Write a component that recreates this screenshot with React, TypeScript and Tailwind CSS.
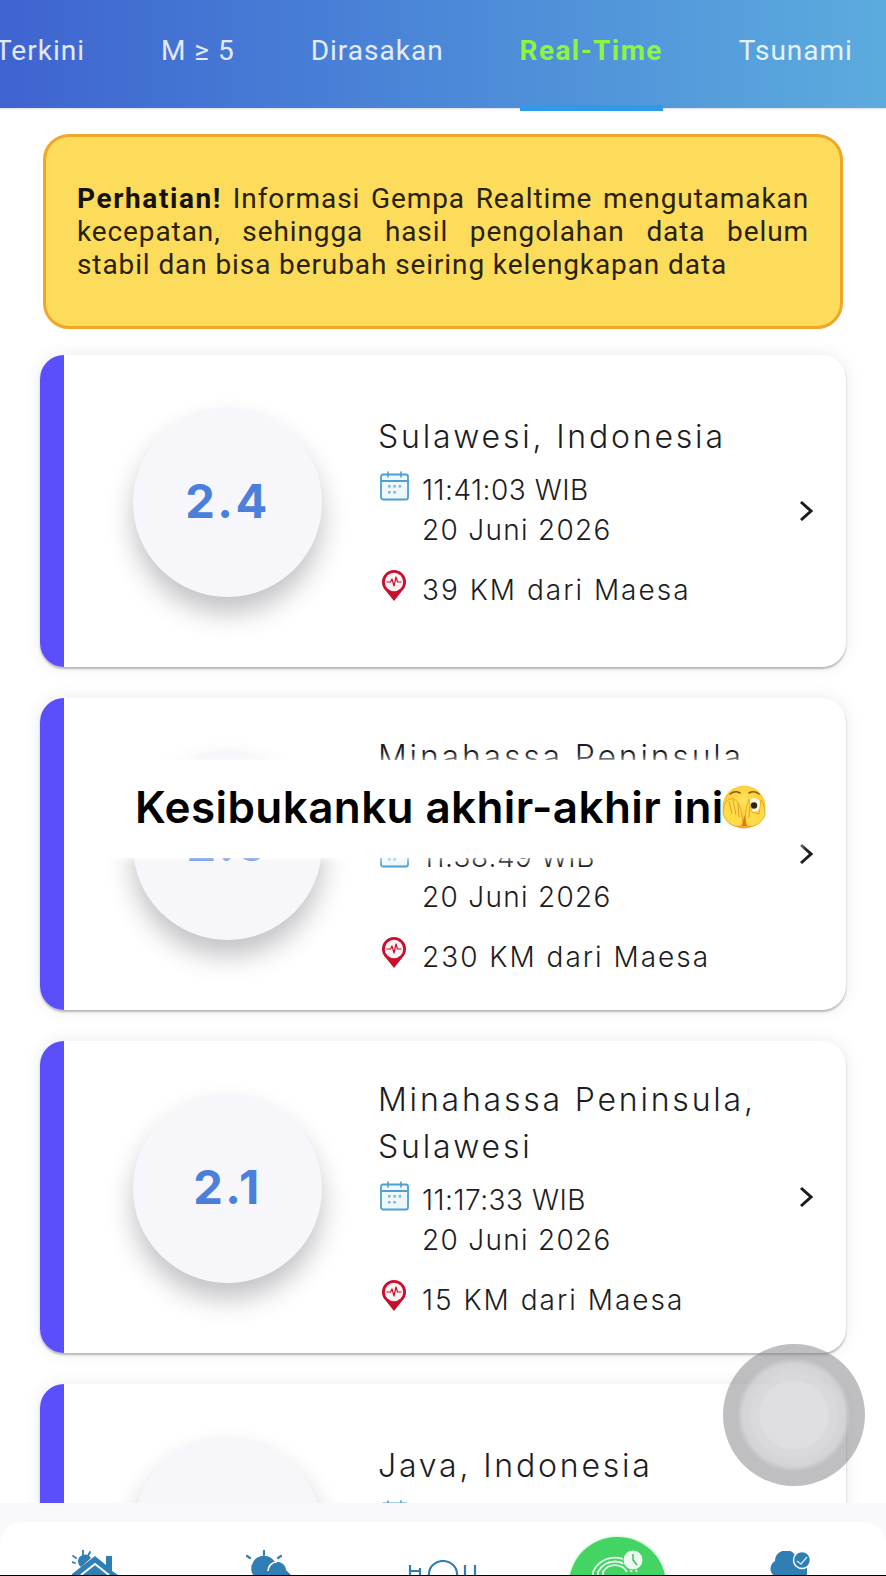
import React from 'react';

interface Quake {
  mag: string;
  place: string[];
  time: string;
  date: string;
  distance: string;
}

const quakes: Quake[] = [
  { mag: '2.4', place: ['Sulawesi, Indonesia'], time: '11:41:03 WIB', date: '20 Juni 2026', distance: '39 KM dari Maesa' },
  { mag: '2.5', place: ['Minahassa Peninsula,', 'Sulawesi'], time: '11:38:49 WIB', date: '20 Juni 2026', distance: '230 KM dari Maesa' },
  { mag: '2.1', place: ['Minahassa Peninsula,', 'Sulawesi'], time: '11:17:33 WIB', date: '20 Juni 2026', distance: '15 KM dari Maesa' },
  { mag: '2.3', place: ['Java, Indonesia'], time: '11:02:18 WIB', date: '20 Juni 2026', distance: '112 KM dari Maesa' },
];

const tabs = ['Terkini', 'M ≥ 5', 'Dirasakan', 'Real-Time', 'Tsunami'];

const CalendarIcon = () => (
  <svg width="29" height="30" viewBox="0 0 29 30" fill="none" className="block">
    <rect x="1" y="3.5" width="27" height="25" rx="2" stroke="#4f9fd0" strokeWidth="1.8" fill="#eef7fc" />
    <path d="M1 10h27" stroke="#4f9fd0" strokeWidth="1.8" />
    <path d="M8 1v5M21 1v5" stroke="#4f9fd0" strokeWidth="1.6" strokeLinecap="round" />
    <g fill="#7fb9dc">
      <rect x="8" y="14" width="2.6" height="2.6" />
      <rect x="13.3" y="14" width="2.6" height="2.6" />
      <rect x="18.6" y="14" width="2.6" height="2.6" />
      <rect x="8" y="20" width="2.6" height="2.6" />
      <rect x="13.3" y="20" width="2.6" height="2.6" />
    </g>
  </svg>
);

const PinIcon = () => (
  <svg width="26" height="33" viewBox="0 0 26 33" className="block">
    <path d="M13 32 L5 22 A12 12 0 1 1 21 22 Z" fill="#c8102e" />
    <circle cx="13" cy="13" r="9.2" fill="#fdf3f4" />
    <path d="M5.5 13h4l1.5-3 2 7 2-9 1.5 5h4" fill="none" stroke="#c8102e" strokeWidth="1.2" strokeLinejoin="round" />
  </svg>
);

const PeekEmoji = () => (
  <svg width="46" height="46" viewBox="0 0 46 46" className="block">
    <defs>
      <radialGradient id="face" cx="50%" cy="35%" r="70%">
        <stop offset="0%" stopColor="#ffe45c" />
        <stop offset="75%" stopColor="#fdc42f" />
        <stop offset="100%" stopColor="#ee8f1c" />
      </radialGradient>
    </defs>
    <circle cx="23" cy="23" r="21.5" fill="url(#face)" />
    <path d="M9 10q5-4 10-1M28 9q5-3 10 1" fill="none" stroke="#8a5a12" strokeWidth="1.6" strokeLinecap="round" />
    <circle cx="33" cy="21" r="7" fill="#fff6dc" />
    <circle cx="33" cy="21.5" r="3.2" fill="#2e2210" />
    <path d="M2 30 C2 19 7 14 12 15 C18 16 21 27 22 40 C18 45 6 42 2 30 Z" fill="#ffdc48" stroke="#e99a20" strokeWidth="0.8" />
    <path d="M24 40 C24 30 26 20 28 15 L31 28 L38 30 L40 16 C43 20 44 26 44 31 C40 42 28 45 24 40 Z" fill="#ffdc48" stroke="#e99a20" strokeWidth="0.8" />
    <path d="M8 17l3 13M12 16l3 15M17 19l1 14M29 20l-1 14" stroke="#e0962a" strokeWidth="0.9" />
    <path d="M21 42l2.5-11 2.5 11z" fill="#e2761a" />
  </svg>
);

const HouseIcon = () => (
  <svg width="46" height="25" viewBox="0 0 46 25" className="block">
    <g stroke="#2f7fb5" strokeWidth="1.8" strokeLinecap="round">
      <path d="M11 0v5M1 6l3 2M18 2l-2 4M0 12l3 1" />
    </g>
    <path d="M6 12a7 7 0 0 1 13-4L9 17a7 7 0 0 1-3-5z" fill="#2f7fb5" />
    <path d="M0 24L23 6l11 9V6h6v15l6 4H0z" fill="#2f7fb5" />
    <path d="M9 25l14-11 14 11" fill="none" stroke="#fff" strokeWidth="2" />
  </svg>
);

const SunIcon = () => (
  <svg width="46" height="25" viewBox="0 0 46 25" className="block">
    <g stroke="#2f7fb5" strokeWidth="2.2" strokeLinecap="round">
      <path d="M18 1v4M1 6l3 2M35 6l-3 2" />
    </g>
    <path d="M7 25a11 11 0 0 1 22-13 9 9 0 0 1 11 8l5 5z" fill="#2f7fb5" />
    <path d="M22 21a9 9 0 0 1 9-9" fill="none" stroke="#fff" strokeWidth="1.6" />
  </svg>
);

const ChartIcon = () => (
  <svg width="70" height="15" viewBox="0 0 70 15" fill="none" className="block">
    <g stroke="#2f7fb5" strokeWidth="2.2">
      <path d="M2 15V5M2 11h9M12 8v7M57 5v10M67 5v10" />
      <path d="M21 15v-1a14 13 0 0 1 28 0v1" />
    </g>
  </svg>
);

const RadarPill = () => (
  <div className="flex h-[80px] w-[97px] justify-center rounded-t-[48px] bg-[#44d464] pt-[13px] shadow-[0_0_3px_#a0f0b0]">
    <svg width="52" height="25" viewBox="0 0 52 25" fill="none" className="block">
      <g stroke="#eafbef" strokeWidth="1.8">
        <path d="M2 25v-3a24 24 0 0 1 44 0" />
        <path d="M7 25v-3a19 19 0 0 1 34 0" />
        <path d="M12 25v-3a14 14 0 0 1 24 0" />
      </g>
      <circle cx="42" cy="10" r="10" fill="#eafbef" stroke="#44d464" strokeWidth="1" />
      <path d="M42 4v6l4 5" stroke="#44b060" strokeWidth="1.4" fill="none" />
    </svg>
  </div>
);

const CloudCheckIcon = () => (
  <svg width="44" height="24" viewBox="0 0 44 24" className="block">
    <path d="M4 24a9 9 0 0 1 2-14 11 11 0 0 1 20-6l12 10v10z" fill="#2f7fb5" />
    <circle cx="33" cy="9" r="8.5" fill="#2f7fb5" stroke="#fff" strokeWidth="1.4" />
    <path d="M28 10l4 3 6-7" fill="none" stroke="#cfe6f5" strokeWidth="1.4" />
  </svg>
);

const QuakeCard = ({ quake }: { quake: Quake }) => (
  <div className="flex h-[312px] flex-none overflow-hidden rounded-[24px] bg-white shadow-[0_2px_2px_rgba(50,50,60,0.32),0_0_16px_rgba(60,60,100,0.1)]">
    <div className="w-[24px] flex-none bg-[#5b4ffb]" />
    <div className="ml-[69px] flex w-[189px] flex-none items-center pb-[17px]">
      <div className="flex h-[189px] w-[189px] items-center justify-center rounded-full bg-[#f6f6fb] shadow-[0_16px_26px_rgba(40,40,50,0.28)]">
        <span className="pb-[2px] font-['Inter'] text-[47px] font-bold tracking-[2.4px] text-[#4a80dc]">{quake.mag}</span>
      </div>
    </div>
    <div className="ml-[56px] flex flex-1 flex-col justify-center pt-[1px] font-['Inter'] font-light text-[#1d1d1f]">
      {quake.place.map((line) => (
        <div key={line} className="h-[47px] text-[32px] leading-[47px] tracking-[2.8px]">{line}</div>
      ))}
      <div className="mt-[10px] flex">
        <div className="w-[44px] flex-none pl-[2px] pt-[1px]"><CalendarIcon /></div>
        <div className="text-[28px] leading-[40px]">
          <div className="tracking-[0.5px]">{quake.time}</div>
          <div className="tracking-[1.3px]">{quake.date}</div>
        </div>
      </div>
      <div className="mt-[20px] flex">
        <div className="w-[44px] flex-none pl-[3px]"><div className="-mt-[1px]"><PinIcon /></div></div>
        <div className="text-[28px] leading-[40px] tracking-[2px]">{quake.distance}</div>
      </div>
    </div>
    <div className="flex w-[47px] flex-none items-center">
      <svg width="14" height="22" viewBox="0 0 14 22" fill="none">
        <path d="M2 2l10 9-10 9" stroke="#1b1b20" strokeWidth="3" />
      </svg>
    </div>
  </div>
);

export default function App() {
  return (
    <div className="relative flex h-[1576px] w-[886px] flex-col overflow-hidden bg-white">
      <header className="relative z-10 -ml-[5px] flex h-[108px] flex-none gap-[76px] bg-gradient-to-r from-[#3f63d0] to-[#5cabde] font-['Roboto'] text-[28px] tracking-[1px] text-white/85 shadow-[0_1px_2px_rgba(0,0,0,0.15)]">
        {tabs.map((tab) => (
          <div key={tab} className={`relative flex items-center pb-[6px] ${tab === 'Real-Time' ? 'font-bold tracking-[1.4px] text-[#8cf542]' : ''}`}>
            {tab}
            {tab === 'Real-Time' && <span className="absolute right-0 bottom-[-3px] left-0 h-[6px] bg-[#2f9ae8]" />}
          </div>
        ))}
      </header>

      <main className="flex min-h-0 flex-1 flex-col overflow-hidden px-[40px] pt-[26px]">
        <div className="mx-[3px] flex h-[195px] flex-none items-center rounded-[26px] border-[3px] border-[#efa727] bg-[#fcdc5a] px-[31px]">
          <p className="text-justify font-['Roboto'] text-[28px] leading-[33px] tracking-[0.9px] text-[#2a2208]">
            <b className="tracking-[1.6px] text-[#161207]">Perhatian!</b> Informasi Gempa Realtime mengutamakan kecepatan, sehingga hasil pengolahan data belum stabil&nbsp;dan bisa berubah seiring kelengkapan data
          </p>
        </div>
        <div className="mt-[26px] flex flex-none flex-col gap-[31px]">
          {quakes.map((quake) => (
            <QuakeCard key={quake.time} quake={quake} />
          ))}
        </div>
      </main>

      <nav className="flex-none bg-[#f9f9fc] pt-[19px]">
        <div className="grid h-[53px] grid-cols-5 overflow-hidden rounded-t-[22px] bg-white px-[8px]">
          <div className="flex justify-center pt-[28px]"><HouseIcon /></div>
          <div className="flex justify-center pt-[28px]"><SunIcon /></div>
          <div className="flex justify-center pt-[38px]"><ChartIcon /></div>
          <div className="flex justify-center pt-[15px]"><RadarPill /></div>
          <div className="flex justify-center pt-[29px]"><CloudCheckIcon /></div>
        </div>
        <div className="h-[1px] bg-black" />
      </nav>

      {/* caption sticker */}
      <div className="absolute top-[760px] left-[105px] flex h-[98px] w-[695px] items-center rounded-[6px] bg-white pb-[4px] pl-[30px] font-['Inter'] text-[44px] font-semibold tracking-[0.4px] text-black shadow-[0_0_8px_white]">
        <span>Kesibukanku akhir-akhir ini</span>
        <div className="-ml-[3px]"><PeekEmoji /></div>
      </div>

      {/* touch indicator */}
      <div className="absolute top-[1344px] left-[723px] h-[142px] w-[142px] rounded-full bg-[radial-gradient(circle_closest-side,rgba(219,218,221,0.9)_47%,rgba(208,207,210,0.8)_50%,rgba(204,203,206,0.75)_60%,rgba(198,197,200,0.72)_63%,rgba(194,193,196,0.7)_72%,rgba(128,126,131,0.5)_80%)]" />
    </div>
  );
}
